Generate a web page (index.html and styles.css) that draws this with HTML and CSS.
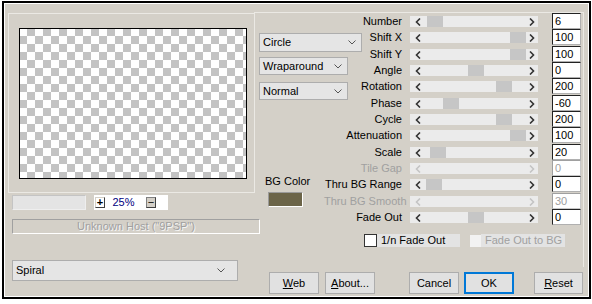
FILE: index.html
```html
<!DOCTYPE html>
<html>
<head>
<meta charset="utf-8">
<link rel="stylesheet" href="styles.css">
</head>
<body>
<div class="dialog">
  <div class="left">
    <div class="preview-group"><div class="preview"></div></div>
    <div class="zoom-row">
      <div class="zoom-field"></div>
      <div class="zoom-ctl">
        <span class="zbtn plus">+</span>
        <span class="zval">25%</span>
        <span class="zbtn minus">&minus;</span>
      </div>
    </div>
    <div class="host">Unknown Host ("9PSP")</div>
    <div class="combo spiral"><span>Spiral</span><svg class="chev" width="8" height="5" viewBox="0 0 8 5"><polyline points="0.5,0.5 4,4 7.5,0.5"/></svg></div>
  </div>
  <div class="right">
    <div class="group">
      <div class="right-top">
        <div class="mid">
          <div class="combo circle"><span>Circle</span><svg class="chev" width="8" height="5" viewBox="0 0 8 5"><polyline points="0.5,0.5 4,4 7.5,0.5"/></svg></div>
          <div class="combo wrap"><span>Wraparound</span><svg class="chev" width="8" height="5" viewBox="0 0 8 5"><polyline points="0.5,0.5 4,4 7.5,0.5"/></svg></div>
          <div class="combo normal"><span>Normal</span><svg class="chev" width="8" height="5" viewBox="0 0 8 5"><polyline points="0.5,0.5 4,4 7.5,0.5"/></svg></div>
          <div class="bg-label">BG Color</div>
          <div class="swatch"></div>
        </div>
        <div class="params">
          <div class="lbl">Number</div>
          <div class="slider"><svg class="la" width="6" height="8" viewBox="0 0 6 8"><polyline points="5,0.5 1.5,4 5,7.5"/></svg><span class="thumb" style="left:17px"></span><svg class="ra" width="6" height="8" viewBox="0 0 6 8"><polyline points="1,0.5 4.5,4 1,7.5"/></svg></div>
          <div class="val">6</div>

          <div class="lbl">Shift X</div>
          <div class="slider"><svg class="la" width="6" height="8" viewBox="0 0 6 8"><polyline points="5,0.5 1.5,4 5,7.5"/></svg><span class="thumb" style="left:100px"></span><svg class="ra" width="6" height="8" viewBox="0 0 6 8"><polyline points="1,0.5 4.5,4 1,7.5"/></svg></div>
          <div class="val">100</div>

          <div class="lbl">Shift Y</div>
          <div class="slider"><svg class="la" width="6" height="8" viewBox="0 0 6 8"><polyline points="5,0.5 1.5,4 5,7.5"/></svg><span class="thumb" style="left:100px"></span><svg class="ra" width="6" height="8" viewBox="0 0 6 8"><polyline points="1,0.5 4.5,4 1,7.5"/></svg></div>
          <div class="val">100</div>

          <div class="lbl">Angle</div>
          <div class="slider"><svg class="la" width="6" height="8" viewBox="0 0 6 8"><polyline points="5,0.5 1.5,4 5,7.5"/></svg><span class="thumb" style="left:58px"></span><svg class="ra" width="6" height="8" viewBox="0 0 6 8"><polyline points="1,0.5 4.5,4 1,7.5"/></svg></div>
          <div class="val">0</div>

          <div class="lbl">Rotation</div>
          <div class="slider"><svg class="la" width="6" height="8" viewBox="0 0 6 8"><polyline points="5,0.5 1.5,4 5,7.5"/></svg><span class="thumb" style="left:86px"></span><svg class="ra" width="6" height="8" viewBox="0 0 6 8"><polyline points="1,0.5 4.5,4 1,7.5"/></svg></div>
          <div class="val">200</div>

          <div class="lbl">Phase</div>
          <div class="slider"><svg class="la" width="6" height="8" viewBox="0 0 6 8"><polyline points="5,0.5 1.5,4 5,7.5"/></svg><span class="thumb" style="left:33px"></span><svg class="ra" width="6" height="8" viewBox="0 0 6 8"><polyline points="1,0.5 4.5,4 1,7.5"/></svg></div>
          <div class="val">-60</div>

          <div class="lbl">Cycle</div>
          <div class="slider"><svg class="la" width="6" height="8" viewBox="0 0 6 8"><polyline points="5,0.5 1.5,4 5,7.5"/></svg><span class="thumb" style="left:86px"></span><svg class="ra" width="6" height="8" viewBox="0 0 6 8"><polyline points="1,0.5 4.5,4 1,7.5"/></svg></div>
          <div class="val">200</div>

          <div class="lbl">Attenuation</div>
          <div class="slider"><svg class="la" width="6" height="8" viewBox="0 0 6 8"><polyline points="5,0.5 1.5,4 5,7.5"/></svg><span class="thumb" style="left:100px"></span><svg class="ra" width="6" height="8" viewBox="0 0 6 8"><polyline points="1,0.5 4.5,4 1,7.5"/></svg></div>
          <div class="val">100</div>

          <div class="lbl">Scale</div>
          <div class="slider"><svg class="la" width="6" height="8" viewBox="0 0 6 8"><polyline points="5,0.5 1.5,4 5,7.5"/></svg><span class="thumb" style="left:20px"></span><svg class="ra" width="6" height="8" viewBox="0 0 6 8"><polyline points="1,0.5 4.5,4 1,7.5"/></svg></div>
          <div class="val">20</div>

          <div class="lbl disabled">Tile Gap</div>
          <div class="slider disabled"><svg class="la" width="6" height="8" viewBox="0 0 6 8"><polyline points="5,0.5 1.5,4 5,7.5"/></svg><svg class="ra" width="6" height="8" viewBox="0 0 6 8"><polyline points="1,0.5 4.5,4 1,7.5"/></svg></div>
          <div class="val disabled">0</div>

          <div class="lbl">Thru BG Range</div>
          <div class="slider"><svg class="la" width="6" height="8" viewBox="0 0 6 8"><polyline points="5,0.5 1.5,4 5,7.5"/></svg><span class="thumb" style="left:16px"></span><svg class="ra" width="6" height="8" viewBox="0 0 6 8"><polyline points="1,0.5 4.5,4 1,7.5"/></svg></div>
          <div class="val">0</div>

          <div class="lbl disabled">Thru BG Smooth</div>
          <div class="slider disabled"><svg class="la" width="6" height="8" viewBox="0 0 6 8"><polyline points="5,0.5 1.5,4 5,7.5"/></svg><svg class="ra" width="6" height="8" viewBox="0 0 6 8"><polyline points="1,0.5 4.5,4 1,7.5"/></svg></div>
          <div class="val disabled">30</div>

          <div class="lbl">Fade Out</div>
          <div class="slider"><svg class="la" width="6" height="8" viewBox="0 0 6 8"><polyline points="5,0.5 1.5,4 5,7.5"/></svg><span class="thumb" style="left:58px"></span><svg class="ra" width="6" height="8" viewBox="0 0 6 8"><polyline points="1,0.5 4.5,4 1,7.5"/></svg></div>
          <div class="val">0</div>
        </div>
      </div>
      <div class="checks">
        <span class="cbox"></span><span class="clabel">1/n Fade Out</span>
        <span class="cbox off"></span><span class="clabel off">Fade Out to BG</span>
      </div>
    </div>
    <div class="buttons">
      <button class="btn web"><u>W</u>eb</button>
      <button class="btn about"><u>A</u>bout...</button>
      <button class="btn cancel">Cancel</button>
      <button class="btn ok">OK</button>
      <button class="btn reset"><u>R</u>eset</button>
    </div>
  </div>
</div>
</body>
</html>
```

FILE: styles.css
```css
* { box-sizing: border-box; }
body {
  margin: 0;
  background: #fff;
  font: 11px "Liberation Sans", Arial, sans-serif;
  color: #000;
}
.dialog {
  margin: 1px 0 0 2px;
  width: 589px;
  height: 298px;
  border: 2px solid #000;
  background: #d4d0c8;
  box-shadow: inset 1px 1px 0 #fff, inset -1px -1px 0 #fff;
  display: grid;
  grid-template-columns: 250px 1fr;
}
/* left column */
.left {
  padding: 10px 0 0 4px;
  display: flex;
  flex-direction: column;
  align-items: flex-start;
}
.preview-group {
  width: 247px;
  height: 180px;
  border: 1px solid #ebe9e4;
  padding: 14px 0 0 10px;
}
.preview {
  width: 228px;
  height: 151px;
  border: 1px solid #000;
  background: repeating-conic-gradient(#c3c3c3 0 25%, #fff 0 50%) -1px -1px / 16px 16px;
}
.zoom-row {
  margin: 2px 0 0 4px;
  display: flex;
  height: 15px;
}
.zoom-field {
  width: 74px;
  height: 15px;
  background: #e4e4e4;
  border: 1px solid;
  border-color: #c4c4c4 #eeeeee #eeeeee #c4c4c4;
}
.zoom-ctl {
  margin-left: 8px;
  width: 74px;
  height: 15px;
  background: #fff;
  display: flex;
  align-items: center;
  line-height: 13px;
}
.zbtn {
  width: 10px;
  height: 11px;
  display: flex;
  align-items: center;
  justify-content: center;
  font-weight: bold;
  font-size: 11px;
  line-height: 9px;
  border: 1px solid;
  background: #d4d0c8;
}
.plus { margin-left: 1px; background: #fff; border-color: #d4d0c8 #404040 #404040 #d4d0c8; }
.minus { margin-right: 12px; border-color: #808080 #404040 #404040 #808080; font-weight: normal; }
.zval {
  flex: 1;
  text-align: center;
  color: #000080;
  padding-right: 4px;
}
.host {
  margin: 9px 0 0 4px;
  width: 248px;
  height: 15px;
  border: 1px solid;
  border-color: #a0a0a0 #fff #fff #a0a0a0;
  text-align: center;
  color: #a0a0a0;
  line-height: 13px;
  text-shadow: 1px 1px 0 #f4f4f4;
}
.combo {
  display: flex;
  align-items: center;
  justify-content: space-between;
  background: #e5e5e5;
  border: 1px solid #adadad;
  padding: 0 5px 0 3px;
  white-space: nowrap;
  line-height: 15px;
}
.chev polyline { fill: none; stroke: #555; stroke-width: 1; }
.spiral {
  margin: 26px 0 0 4px;
  width: 226px;
  height: 21px;
  padding-right: 12px;
}
/* right column */
.right {
  display: flex;
  flex-direction: column;
}
.group {
  margin: 9px 5px 0 0;
  height: 255px;
  border-top: 1px solid #ebe9e4;
  border-right: 1px solid #ebe9e4;
}
.right-top { display: flex; }
.mid {
  width: 70px;
  padding-left: 5px;
  display: flex;
  flex-direction: column;
  align-items: flex-start;
}
.circle { margin-top: 20px; width: 103px; height: 19px; }
.wrap { margin-top: 5px; width: 89px; height: 18px; }
.normal { margin-top: 7px; width: 89px; height: 18px; }
.bg-label { margin: 75px 0 0 6px; line-height: 13px; }
.swatch {
  margin: 4px 0 0 9px;
  width: 35px;
  height: 15px;
  background: #6b6448;
  border: 1px solid;
  border-color: #9a9a9a #fff #fff #9a9a9a;
}
.params {
  display: grid;
  grid-template-columns: 86px 142px 29px;
  grid-template-rows: 16px 17px 16px 16px 17px 16px 16px 17px 16px 16px 17px 16px 16px;
  align-items: start;
}
.lbl {
  text-align: right;
  padding: 2px 8px 0 0;
  white-space: nowrap;
  line-height: 13px;
  height: 16px;
}
.lbl.disabled { color: #a0a0a0; }
.slider {
  position: relative;
  margin-top: 3px;
  width: 128px;
  height: 11px;
  background: #ebebeb;
  display: flex;
  align-items: center;
  justify-content: space-between;
  padding: 0 3px 0 5px;
}
.slider svg { display: block; }
.slider polyline { fill: none; stroke: #333; stroke-width: 1.6; }
.slider.disabled polyline { stroke: #c4c4c4; }
.thumb {
  position: absolute;
  top: 0;
  width: 16px;
  height: 11px;
  background: #c6c6c6;
}
.val {
  height: 16px;
  background: #fff;
  border: 1px solid;
  border-color: #222 #b0b0b0 #b0b0b0 #222;
  padding-left: 2px;
  line-height: 14px;
}
.val.disabled {
  color: #a0a0a0;
  border-color: #a0a0a0 #c8c8c8 #c8c8c8 #a0a0a0;
}
.checks {
  margin-top: 9px;
  padding-left: 110px;
  display: flex;
  align-items: center;
  height: 13px;
}
.cbox {
  width: 13px;
  height: 13px;
  background: #fff;
  border: 1px solid #333;
}
.cbox.off {
  margin-left: 10px;
  width: 11px;
  height: 12px;
  background: #f2f2f2;
  border: none;
}
.clabel {
  width: 83px;
  height: 13px;
  background: #e3e3e3;
  padding-left: 4px;
  line-height: 13px;
  white-space: nowrap;
}
.clabel.off { width: 84px; color: #a0a0a0; }
.buttons {
  margin-top: 5px;
  padding-left: 15px;
  display: flex;
}
.btn {
  width: 50px;
  height: 22px;
  background: #e1e1e1;
  border: 1px solid #adadad;
  font: 11px "Liberation Sans", Arial, sans-serif;
  color: #000;
  padding: 0;
}
.about { margin-left: 6px; }
.cancel { margin-left: 34px; }
.ok { margin-left: 5px; border: 2px solid #0078d7; }
.reset { margin-left: 20px; width: 49px; }
```
